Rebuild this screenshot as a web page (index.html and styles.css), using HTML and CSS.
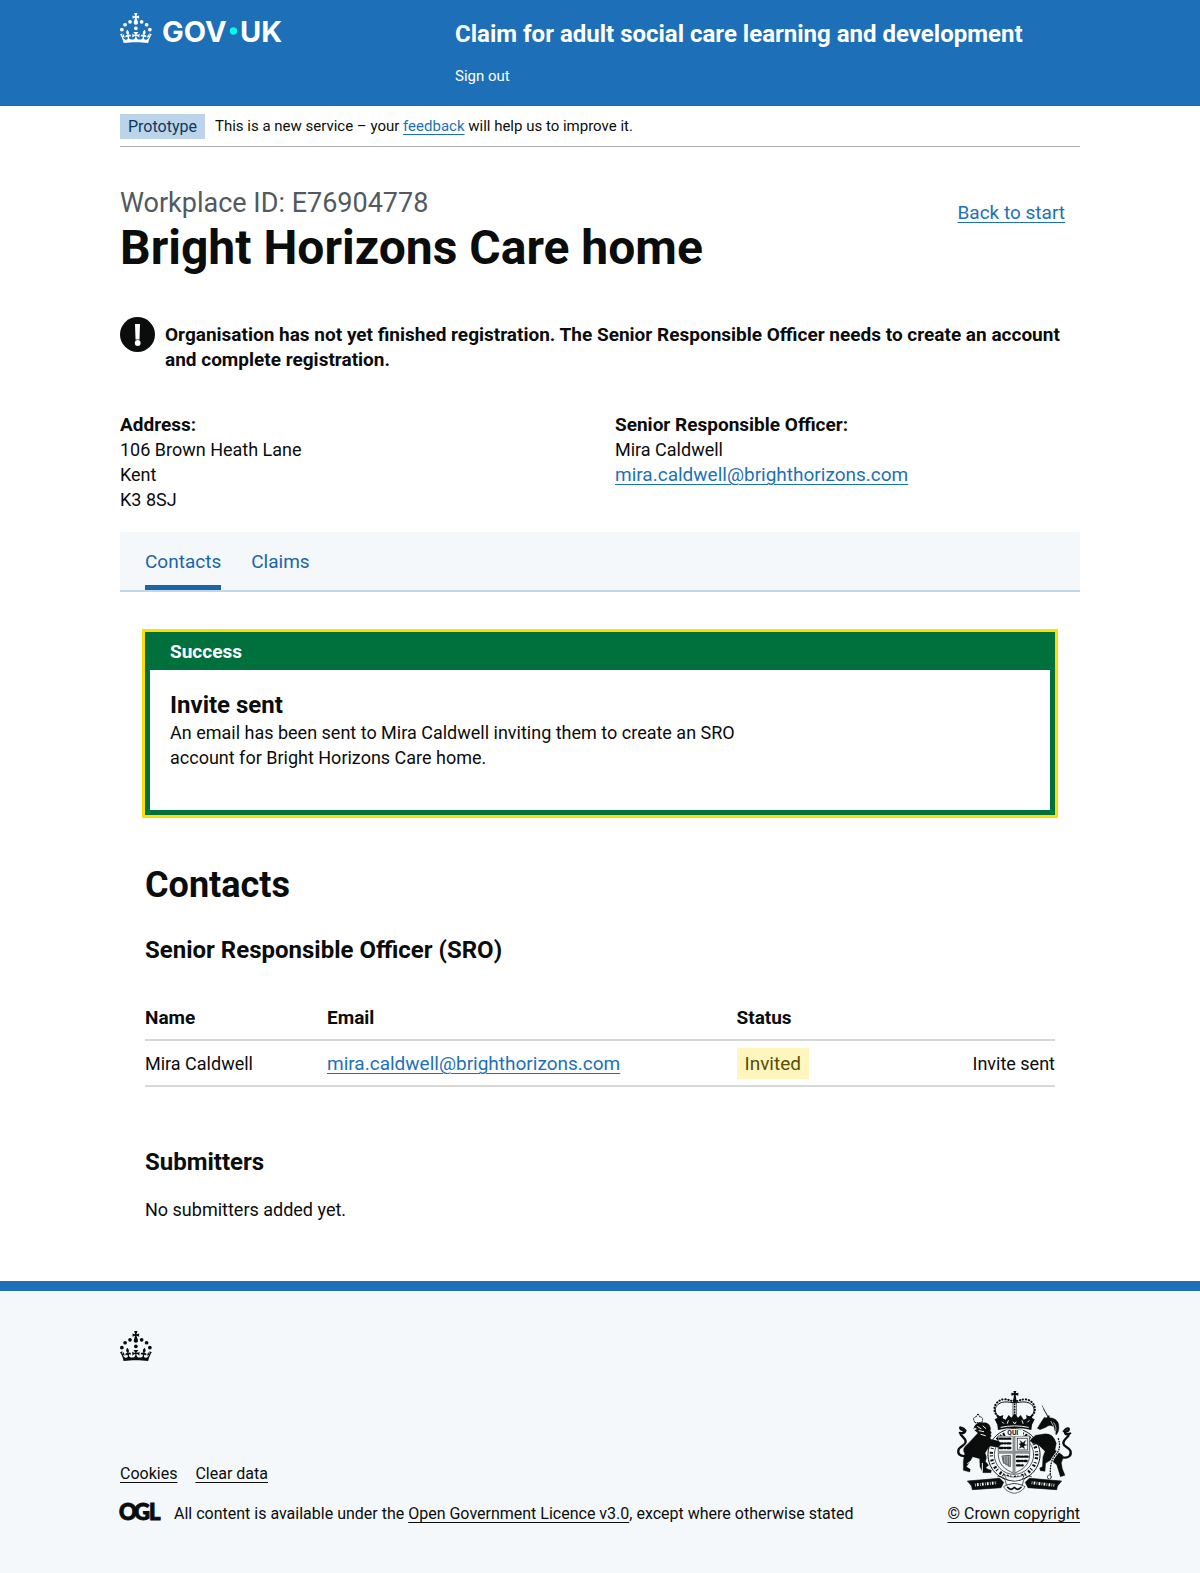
FILE: index.html
```html
<!DOCTYPE html>
<html lang="en">
<head>
<meta charset="utf-8">
<meta name="viewport" content="width=device-width, initial-scale=1">
<title>Bright Horizons Care home - Claim for adult social care learning and development</title>
<link rel="stylesheet" href="styles.css">
</head>
<body>
<svg class="defs" width="0" height="0" aria-hidden="true">
  <symbol id="crown" viewBox="0 0 64 60">
    <circle cx="20" cy="17.6" r="3.7"/><circle cx="10.2" cy="23.5" r="3.7"/><circle cx="3.7" cy="33.2" r="3.7"/><circle cx="31.7" cy="30.6" r="3.7"/><circle cx="43.3" cy="17.6" r="3.7"/><circle cx="53.2" cy="23.5" r="3.7"/><circle cx="59.7" cy="33.2" r="3.7"/>
    <path d="M33.1,9.8c.2-.1.3-.3.5-.5l4.6,2.4v-6.8l-4.6,1.5c-.1-.2-.3-.3-.5-.5l1.9-5.9h-6.7l1.9,5.9c-.2.1-.3.3-.5.5l-4.6-1.5v6.8l4.6-2.4c.1.2.3.3.5.5l-2.6,8c-.9,2.8,1.2,5.7,4.1,5.7h0c3,0,5.1-2.9,4.1-5.7l-2.6-8ZM37,37.9s-3.4,3.8-4.1,6.1c2.2,0,4.2-.5,6.4-2.8l-.7,8.5c-2-2.8-4.4-4.1-5.7-3.8.1,3.1.5,6.7,5.8,7.2,3.7.3,6.7-1.5,7-3.8.4-2.6-2-4.3-3.7-1.6-1.4-4.5,2.4-6.1,4.9-3.2-1.9-4.5-1.8-7.7,2.4-10.9,3,4,2.6,7.3-1.2,11.1,2.4-1.3,6.2,0,4,4.6-1.2-2.8-3.7-2.2-4.2.2-.3,1.7.7,3.7,3,4.2,1.9.3,4.7-.9,7-5.9-1.3,0-2.4.7-3.9,1.7l2.4-8c.6,2.3,1.4,3.7,2.2,4.5.6-1.6.5-2.8,0-5.3l5,1.8c-2.6,3.6-5.2,8.7-7.3,17.5-7.4-1.1-15.7-1.7-24.5-1.7h0c-8.8,0-17.1.6-24.5,1.7-2.1-8.9-4.7-13.9-7.3-17.5l5-1.8c-.5,2.5-.6,3.7,0,5.3.8-.8,1.6-2.3,2.2-4.5l2.4,8c-1.5-1-2.6-1.7-3.9-1.7,2.3,5,5.2,6.2,7,5.9,2.3-.4,3.3-2.4,3-4.2-.5-2.4-3-3.1-4.2-.2-2.2-4.6,1.6-6,4-4.6-3.7-3.7-4.2-7.1-1.2-11.1,4.2,3.2,4.3,6.4,2.4,10.9,2.5-2.8,6.3-1.3,4.9,3.2-1.8-2.7-4.1-1-3.7,1.6.3,2.3,3.3,4.1,7,3.8,5.4-.5,5.7-4.2,5.8-7.2-1.3-.2-3.7,1-5.7,3.8l-.7-8.5c2.2,2.3,4.2,2.7,6.4,2.8-.7-2.3-4.1-6.1-4.1-6.1h10.6,0Z"/>
  </symbol>
</svg>

<header class="header">
  <div class="container header-inner">
    <a class="header-logo" href="#" aria-label="GOV.UK">
      <svg width="164" height="30" viewBox="0 0 164 30" fill="currentColor">
        <use href="#crown" width="32" height="30"/>
        <text class="logo-text" x="42" y="29">GOV</text>
        <circle class="logo-dot" cx="113.500" cy="18" r="3.700"/>
        <text class="logo-text" x="120" y="29">UK</text>
      </svg>
    </a>
    <div class="header-content">
      <a class="service-name" href="#">Claim for adult social care learning and development</a>
      <nav><a class="sign-out" href="#">Sign out</a></nav>
    </div>
  </div>
</header>

<div class="container">
  <div class="phase-banner">
    <strong class="phase-tag">Prototype</strong>
    <span>This is a new service – your <a class="link" href="#">feedback</a> will help us to improve it.</span>
  </div>

  <main class="main">
    <div class="title-row">
      <div>
        <span class="caption">Workplace ID: E76904778</span>
        <h1 class="heading-xl">Bright Horizons Care home</h1>
      </div>
      <a class="link back-link" href="#">Back to start</a>
    </div>

    <div class="warning">
      <svg class="warning-icon" width="35" height="35" viewBox="0 0 35 35" aria-hidden="true">
        <circle cx="17.5" cy="17.5" r="17.5" fill="#0b0c0c"/>
        <path d="M15 7h5l-.5 15.500h-4z" fill="#fff"/>
        <circle cx="17.700" cy="26" r="2.900" fill="#fff"/>
      </svg>
      <strong class="warning-text">Organisation has not yet finished registration. The Senior Responsible Officer needs to create an account and complete registration.</strong>
    </div>

    <div class="details">
      <div>
        <h2 class="label">Address:</h2>
        <p>106 Brown Heath Lane<br>Kent<br>K3 8SJ</p>
      </div>
      <div>
        <h2 class="label">Senior Responsible Officer:</h2>
        <p>Mira Caldwell<br><a class="link link-m" href="#">mira.caldwell@brighthorizons.com</a></p>
      </div>
    </div>

    <nav class="tabs">
      <a class="tab tab-current" href="#" aria-current="page">Contacts</a>
      <a class="tab" href="#">Claims</a>
    </nav>

    <div class="panel">
      <section class="banner" role="alert">
        <h2 class="banner-title">Success</h2>
        <div class="banner-body">
          <h3 class="heading-m">Invite sent</h3>
          <p>An email has been sent to Mira Caldwell inviting them to create an SRO account for Bright Horizons Care home.</p>
        </div>
      </section>

      <h2 class="heading-l">Contacts</h2>
      <h3 class="heading-m">Senior Responsible Officer (SRO)</h3>
      <table class="table">
        <thead>
          <tr><th class="col-name" scope="col">Name</th><th class="col-email" scope="col">Email</th><th scope="col">Status</th><td></td></tr>
        </thead>
        <tbody>
          <tr>
            <td>Mira Caldwell</td>
            <td><a class="link link-m" href="#">mira.caldwell@brighthorizons.com</a></td>
            <td><strong class="status-tag">Invited</strong></td>
            <td class="col-action">Invite sent</td>
          </tr>
        </tbody>
      </table>

      <h3 class="heading-m">Submitters</h3>
      <p class="empty">No submitters added yet.</p>
    </div>
  </main>
</div>

<footer class="footer">
  <div class="container">
    <svg class="footer-crown" width="32" height="30" fill="currentColor" aria-hidden="true"><use href="#crown" width="32" height="30"/></svg>
    <div class="footer-meta">
      <div class="footer-left">
        <div class="footer-links">
          <a class="footer-link" href="#">Cookies</a>
          <a class="footer-link" href="#">Clear data</a>
        </div>
        <div class="licence">
          <svg class="ogl" width="42" height="18" viewBox="0 0 42 18" aria-hidden="true">
            <text x="-1" y="16">O</text><text x="14" y="16">G</text><text x="29" y="16">L</text>
          </svg>
          <span>All content is available under the <a class="footer-link" href="#">Open Government Licence v3.0</a>, except where otherwise stated</span>
        </div>
      </div>
      <div class="footer-right">
        <svg class="crest" width="119" height="103" viewBox="48 33 357 309" fill="none" stroke="#0b0c0c" stroke-linecap="round" stroke-linejoin="round" aria-hidden="true">
          <!-- large crown -->
          <g fill="#0b0c0c" stroke="none">
            <path d="M223 33h9l-2 7 8-2v9l-8-2 2 13h-9l2-13-8 2v-9l8 2z"/>
            <path d="M177 150l-2-16-8-16 8-4-2-9 10 4 10-4-2 10 9 4 9-14 8 8 10-13 10 13 8-8 9 14 9-4-2-10 10 4 10-4-2 9 8 4-8 16-2 16q-50-12-100 0z"/>
            <circle cx="227" cy="62" r="6"/>
          </g>
          <path d="M180 110c-22-16-10-42 16-44 12-1 20 2 31 2 11 0 19-3 31-2 26 2 38 28 16 44" stroke-width="3"/>
          <path d="M176 108c-22-20-4-48 18-50 14-1 22 6 33 6 11 0 19-7 33-6 22 2 40 30 18 50" stroke-width="6" stroke-dasharray="1 8"/>
          <path d="M222 68v38M232 68v38" stroke-width="2"/>
          <path d="M227 72v34" stroke-width="5" stroke-dasharray="1 7"/>
          <path d="M190 126l4 4m14-8l-3 8m18-4l4 6 4-6m18-4l3 8m14-4l4-4M186 142q41-9 82 0" stroke="#f4f8fb" stroke-width="3"/>
          <!-- garter and shield -->
          <circle cx="225" cy="224" r="78" stroke-width="3" stroke-dasharray="7 2"/>
          <circle cx="225" cy="224" r="68" stroke-width="10" stroke-linecap="butt" stroke-dasharray="3 5 6 9"/>
          <circle cx="225" cy="224" r="59" stroke-width="2"/>
          <path d="M178 168h94v56c0 30-20 45-47 56-27-11-47-26-47-56z" fill="#f4f8fb" stroke-width="2"/>
          <path d="M182 176h36M182 190h36M182 204h36" stroke-width="7" stroke-dasharray="9 6 2 6"/>
          <path d="M235 175h31v35h-31z" stroke-width="2" stroke-dasharray="3 2"/>
          <path d="M243 182l9 6 8-7-4 11 7 3-9 3 3 8-8-5-8 4 4-8-5-5 6-2z" fill="#0b0c0c" stroke-width="1"/>
          <path d="M190 228l24-2v34l-20-12zM194 232v18m7-19v24m7-24v28" stroke-width="3" stroke="#5d6061" fill="#a7aaac"/>
          <path d="M234 230h32M234 243h29M234 256h18" stroke-width="7" stroke-dasharray="9 6 2 6"/>
          <path d="M225 168v110M178 217h94" stroke="#8d8f90" stroke-width="9" stroke-linecap="butt"/>
          <!-- lion -->
          <g fill="#0b0c0c" stroke-width="1">
            <path d="M104 146q4-15 16-18l20 0q13 3 15 18-4 5 2 12-5 4 0 10-6 4-2 10l25 6 6 9-8 9-26-4-14 21q8 14 1 25l10 12-8 6q4 8 16 8l-1 8h-24l-9-18-1-24-21-6-9 16-10 14 12 8-2 8-19-5 0-28 4-22q-10-16 10-30l30-32-10-8 8-4-10-6 6-5z"/>
            <path d="M108 128q-10-16 4-18l5-9 5 9q14 2 6 18z" fill="#f4f8fb" stroke-width="3" stroke-dasharray="3 4"/>
          </g>
          <path d="M80 228c-16 2-26-6-21-20 5-10 20-12 21-22 1-12-16-18-16-26 8 0 12-2 10-8-4-4-12-2-10-10" stroke-width="7"/>
          <path d="M66 144q4-4 14 8M62 158q10 4 16-2" stroke-width="6"/>
          <path d="M116 140l10 6m6-8l8 7m-20 7l14 3m-8 8l13 4M86 250l12-8m32 8v24" stroke="#f4f8fb" stroke-width="3"/>
          <!-- unicorn -->
          <path d="M310 78l16 32M314 88l14 22" stroke-width="2" stroke-dasharray="4 3"/>
          <g fill="#0b0c0c" stroke-width="1">
            <path d="M298 140l10-16 8-12 6 2 8-8 2 7q22 1 27 20 3 22-8 32l-6-24q-14-10-24 1l-18 7-8-4z"/>
            <path d="M290 166l24-4q28-4 38 28l-4 20 23 16q3 12-4 22l3 18 8 20-14 4-6-20-5-16-18-14-15 10-2 24-14-2-2-8 8-4 2-30 6-16-20-20-18-4-4-12z"/>
          </g>
          <path d="M372 232c16 4 27-6 22-20-5-10-20-12-21-22-1-12 16-18 16-26-8 0-12-2-10-8 4-4 12-2 10-10" stroke-width="7"/>
          <path d="M388 146q-4-4-14 8M394 160q-10 4-16-2" stroke-width="6"/>
          <path d="M344 128q12 14 4 32M336 124q10 12 8 28" stroke="#f4f8fb" stroke-width="2"/>
          <path d="M358 176q10 30-8 48t-16 62" stroke="#f4f8fb" stroke-width="8"/>
          <path d="M358 176q10 30-8 48t-16 62" stroke-width="4" stroke-dasharray="2 6"/>
          <circle cx="331" cy="291" r="6" stroke-width="2"/>
          <!-- motto scroll -->
          <path d="M86 303l96-8 12 12-8 16-86 6-2-10zM367 303l-96-8-12 12 8 16 86 6 2-10z" fill="#0b0c0c" stroke-width="2"/>
          <path d="M108 315l66-7M278 308l68 8" stroke="#f4f8fb" stroke-width="9" stroke-dasharray="2 4 5 4" stroke-linecap="butt"/>
          <path d="M176 290q24-6 26 26l24-5 24 5q4-34 28-26" stroke-width="2"/>
          <path d="M196 284q30 14 60 0l-6 14q-24 10-48 0zM194 320q32-18 64 0-8 16-32 20-24-4-32-20z" fill="#f4f8fb" stroke-width="2" stroke-dasharray="6 3"/>
          <path d="M206 322q10 12 20 0 10 12 20 0" stroke-width="5"/>
          <path d="M200 148h52v20h-52z" fill="#f4f8fb" stroke="none"/>
          <text class="crest-text" x="205" y="165">QUI</text>
        </svg>
        <a class="footer-link" href="#">© Crown copyright</a>
      </div>
    </div>
  </div>
</footer>
</body>
</html>
```
FILE: styles.css
```css
* { box-sizing: border-box; }

body {
  margin: 0;
  color: #0b0c0c;
  background: #fff;
  font-family: Roboto, "Liberation Sans", sans-serif;
  font-size: 18px;
  line-height: 25px;
}

h1, h2, h3, p { margin: 0; }

svg {
  display: block;
  overflow: visible;
}

.defs { position: absolute; }

.container {
  max-width: 990px;
  margin: 0 auto;
  padding: 0 15px;
}

.link {
  color: #1d70b8;
  text-decoration: underline;
  text-decoration-thickness: 1px;
  text-underline-offset: 3px;
}

.link-m { font-size: 19px; }

/* Header */
.header {
  background: #1d70b8;
  color: #fff;
}

.header-inner {
  display: flex;
  flex-wrap: wrap;
}

.header a {
  color: #fff;
  text-decoration: none;
}

.header-logo {
  flex: 0 0 335px;
  padding-top: 13px;
}

.logo-text {
  font-family: Inter, sans-serif;
  font-size: 29px;
  font-weight: 700;
}

.logo-dot { fill: #00ffe0; }

.header-content {
  flex: 1;
  display: flex;
  flex-direction: column;
  gap: 17px;
  padding: 19px 0 20px;
}

.service-name {
  font-size: 24px;
  font-weight: 700;
  line-height: 30px;
}

.header nav {
  font-size: 15px;
  line-height: 20px;
}

/* Phase banner */
.phase-banner {
  display: flex;
  align-items: center;
  gap: 10px;
  padding: 8px 0 7px;
  border-bottom: 1px solid #b1b4b6;
  font-size: 15px;
}

.phase-tag {
  padding: 0 8px;
  background: #bbd4ea;
  color: #0f385c;
  font-size: 16px;
  font-weight: 400;
}

/* Page heading */
.main { padding: 41px 0 59px; }

.title-row {
  display: flex;
  justify-content: space-between;
  padding-right: 15px;
}

.caption {
  display: block;
  margin-bottom: 5px;
  color: #505a5f;
  font-size: 27px;
  line-height: 30px;
}

.heading-xl {
  font-size: 48px;
  line-height: 50px;
}

.heading-l {
  font-size: 36px;
  line-height: 40px;
}

.heading-m {
  font-size: 24px;
  line-height: 30px;
}

.back-link {
  padding-top: 12px;
  font-size: 19px;
}

.warning {
  display: flex;
  gap: 10px;
  margin: 44px 0 40px;
}

.warning-icon { flex: none; }

.warning-text {
  padding-top: 5px;
  font-size: 19px;
}

.details {
  display: grid;
  grid-template-columns: 1fr 1fr;
  gap: 30px;
  margin-bottom: 20px;
}

.label {
  font-size: 19px;
  line-height: 25px;
}

/* Tabs */
.tabs {
  display: flex;
  gap: 30px;
  padding: 0 25px;
  background: #f4f8fb;
  border-bottom: 2px solid #bfd7ea;
}

.tab {
  padding: 17px 0 11px;
  border-bottom: 5px solid transparent;
  color: #1a65a6;
  font-size: 19px;
  text-decoration: none;
}

.tab-current { border-bottom-color: #1a65a6; }

.panel { padding: 40px 25px 0; }

/* Success banner */
.banner {
  margin-bottom: 50px;
  border: 5px solid #00703c;
  outline: 3px solid #ffdd00;
}

.banner-title {
  padding: 2px 20px 6px;
  background: #00703c;
  color: #fff;
  font-size: 19px;
  line-height: 25px;
}

.banner-body { padding: 20px 20px 40px; }

.banner-body p { max-width: 605px; }

.heading-l + .heading-m { margin-top: 30px; }

/* Contacts table */
.table {
  width: 100%;
  margin: 30px 0 60px;
  border-collapse: separate;
  border-spacing: 0;
}

.table th,
.table td {
  padding: 10px 20px 9px 0;
  border-bottom: 2px solid #d8d8d8;
  text-align: left;
}

.table th { font-size: 19px; }

.col-name { width: 20%; }

.col-email { width: 45%; }

.table .col-action {
  padding-right: 0;
  text-align: right;
}

.status-tag {
  padding: 4px 8px;
  background: #fff5bf;
  color: #594d00;
  font-size: 19px;
  font-weight: 400;
}

.empty { margin-top: 20px; }

/* Footer */
.footer {
  padding: 40px 0 49px;
  background: #f4f8fb;
  border-top: 10px solid #1d70b8;
  font-size: 16px;
  line-height: 20px;
}

.footer-link {
  color: #0b0c0c;
  text-decoration: underline;
  text-decoration-thickness: 1px;
  text-underline-offset: 3px;
}

.footer-meta {
  display: flex;
  justify-content: space-between;
  align-items: flex-end;
  gap: 20px;
  margin-top: 30px;
}

.footer-left {
  display: flex;
  flex-direction: column;
  gap: 20px;
}

.footer-links {
  display: flex;
  gap: 18px;
}

.licence {
  display: flex;
  gap: 12px;
}

.ogl { flex: none; }

.ogl text {
  fill: #0b0c0c;
  stroke: #0b0c0c;
  stroke-width: 1px;
  font-family: Lato, sans-serif;
  font-size: 22px;
  font-weight: 900;
}

.footer-right {
  display: flex;
  flex-direction: column;
  align-items: flex-end;
  gap: 10px;
}

.crest { margin-right: 6px; }

.crest-text {
  fill: #0b0c0c;
  stroke: none;
  font-family: Roboto, sans-serif;
  font-size: 20px;
  font-weight: 700;
}
```
